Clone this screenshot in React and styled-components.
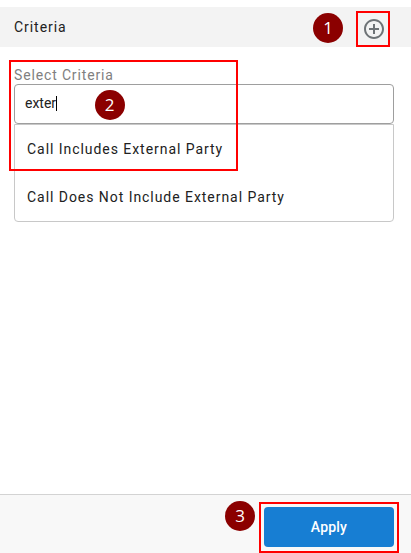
import React from 'react'
import styled, { createGlobalStyle } from 'styled-components'

const GlobalStyle = createGlobalStyle`
    * {
        box-sizing: border-box;
    }
    body {
        margin: 0;
        background: #ffffff;
        font-family: Roboto, "Liberation Sans", sans-serif;
        color: #212121;
    }
`

const Panel = styled.div`
    width: 411px;
    height: 553px;
    padding-top: 7px;
    display: flex;
    flex-direction: column;
    overflow: hidden;
`

const Header = styled.div`
    height: 40px;
    padding: 0 25px 0 14px;
    display: flex;
    align-items: center;
    justify-content: space-between;
    background: #f3f3f3;
`

const Title = styled.div`
    font-size: 14px;
    line-height: 20px;
    letter-spacing: 0.95px;
`

const AddButton = styled.button`
    position: relative;
    width: 24px;
    height: 24px;
    margin-top: 4px;
    padding: 0;
    border: none;
    background: none;
    color: #6e7376;
    svg {
        display: block;
    }
`

const Body = styled.div`
    flex: 1;
    padding: 20px 17px 0 14px;
`

const Field = styled.div`
    position: relative;
`

const Label = styled.div`
    height: 17px;
    font-size: 14px;
    line-height: 17px;
    letter-spacing: 0.85px;
    color: #808080;
`

const Input = styled.div`
    height: 40px;
    padding: 0 10px 2px;
    display: flex;
    align-items: center;
    border: 1px solid #9e9e9e;
    border-radius: 4px;
    font-size: 14px;
`

const Caret = styled.span`
    width: 1px;
    height: 15px;
    background: #000000;
`

const Options = styled.div`
    height: 98px;
    border: 1px solid #c8c8c8;
    border-radius: 0 0 4px 4px;
`

const Option = styled.div`
    height: 48px;
    padding: 0 12px;
    font-size: 14px;
    line-height: 48px;
    letter-spacing: 0.95px;
    white-space: nowrap;
`

const Footer = styled.div`
    height: 59px;
    padding: 12px 17px 0 0;
    display: flex;
    justify-content: flex-end;
    border-top: 1px solid #d3d3d3;
    background: #f8f8f8;
`

const ApplyButton = styled.button`
    position: relative;
    width: 130px;
    height: 40px;
    padding: 0;
    border: none;
    border-radius: 4px;
    font-family: inherit;
    font-size: 14px;
    font-weight: 500;
    letter-spacing: 0.2px;
    color: #ffffff;
    background: #177ed3;
`

// tutorial callouts, drawn over the control they belong to
const Highlight = styled.span`
    position: absolute;
    left: ${({ x }) => x}px;
    top: ${({ y }) => y}px;
    width: ${({ w }) => w}px;
    height: ${({ h }) => h}px;
    border: 2px solid #ff0000;
    pointer-events: none;
`

const Step = styled.span`
    position: absolute;
    left: ${({ x }) => x}px;
    top: ${({ y }) => y}px;
    width: 30px;
    height: 30px;
    border-radius: 50%;
    font-family: "Open Sans", "Noto Sans", sans-serif;
    font-size: 17px;
    font-weight: 400;
    line-height: 29px;
    letter-spacing: 0;
    text-align: center;
    color: #ffffff;
    background: #8b0000;
`

const options = ['Call Includes External Party', 'Call Does Not Include External Party']

const AddIcon = () => (
    <svg width="24" height="24" viewBox="0 0 24 24" fill="currentColor">
        <path d="M13 7h-2v4H7v2h4v4h2v-4h4v-2h-4V7zm-1-5C6.48 2 2 6.48 2 12s4.48 10 10 10 10-4.48 10-10S17.52 2 12 2zm0 18c-4.41 0-8-3.59-8-8s3.59-8 8-8 8 3.59 8 8-3.59 8-8 8z" />
    </svg>
)

const App = () => {

    return (
        <>
            <GlobalStyle />
            <Panel>
                <Header>
                    <Title>Criteria</Title>
                    <AddButton aria-label="Add">
                        <AddIcon />
                        <Highlight x={-6} y={-6} w={34} h={36} />
                        <Step x={-49} y={-4}>1</Step>
                    </AddButton>
                </Header>
                <Body>
                    <Field>
                        <Label>Select Criteria</Label>
                        <Input>exter<Caret /></Input>
                        <Options>
                            {options.map((option) => (
                                <Option key={option}>{option}</Option>
                            ))}
                        </Options>
                        <Highlight x={-5} y={-7} w={229} h={111} />
                        <Step x={80.5} y={23}>2</Step>
                    </Field>
                </Body>
                <Footer>
                    <ApplyButton>
                        Apply
                        <Highlight x={-5} y={-5} w={140} h={51} />
                        <Step x={-39} y={-6}>3</Step>
                    </ApplyButton>
                </Footer>
            </Panel>
        </>
    )
}

export default App
